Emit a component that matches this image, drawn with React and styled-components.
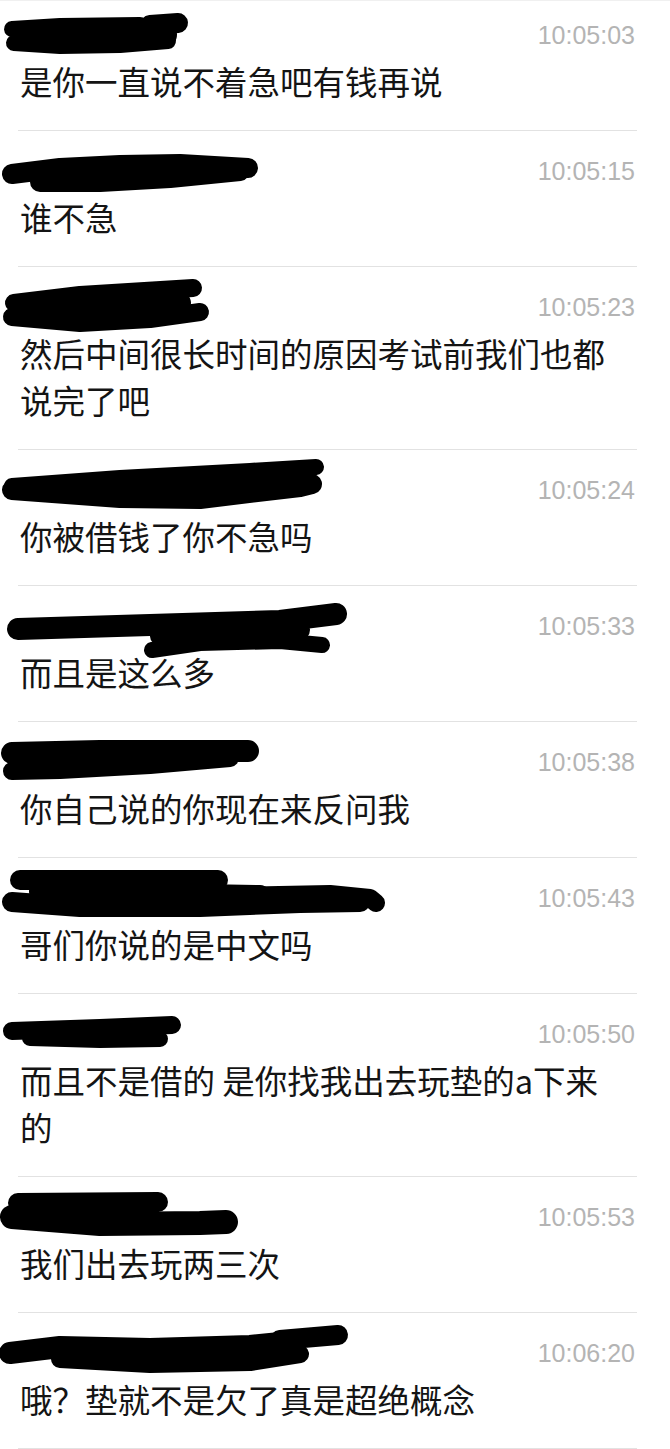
import styled, { createGlobalStyle } from 'styled-components';

const messages = [
  {
    time: '10:05:03',
    text: '是你一直说不着急吧有钱再说',
    marks: [
      { w: 16, p: '12,34 60,31 140,30' },
      { w: 20, p: '150,30 178,28' },
      { w: 16, p: '14,48 60,51 120,50 168,46' },
      { w: 24, p: '30,42 165,40' },
    ],
  },
  {
    time: '10:05:15',
    text: '谁不急',
    marks: [
      { w: 20, p: '12,43 60,37 120,34 180,33 248,37' },
      { w: 20, p: '40,51 100,51 170,47 240,40' },
    ],
  },
  {
    time: '10:05:23',
    text: '然后中间很长时间的原因考试前我们也都说完了吧',
    marks: [
      { w: 18, p: '14,36 80,28 193,21' },
      { w: 18, p: '12,50 80,56 150,52 200,45' },
      { w: 22, p: '40,44 180,36' },
    ],
  },
  {
    time: '10:05:24',
    text: '你被借钱了你不急吗',
    marks: [
      { w: 16, p: '12,36 120,28 250,21 316,17' },
      { w: 20, p: '12,40 120,48 200,49 300,37 312,34' },
      { w: 22, p: '40,40 260,32' },
      { w: 16, p: '200,36 305,26' },
    ],
  },
  {
    time: '10:05:33',
    text: '而且是这么多',
    marks: [
      { w: 22, p: '18,43 150,39 280,35 336,28' },
      { w: 16, p: '152,64 200,57 280,55 322,59' },
      { w: 20, p: '160,50 300,44' },
    ],
  },
  {
    time: '10:05:38',
    text: '你自己说的你现在来反问我',
    marks: [
      { w: 22, p: '12,31 100,29 248,29' },
      { w: 18, p: '12,49 60,48 150,43 230,36' },
      { w: 18, p: '40,40 200,34' },
    ],
  },
  {
    time: '10:05:43',
    text: '哥们你说的是中文吗',
    marks: [
      { w: 20, p: '20,22 218,22' },
      { w: 18, p: '220,38 330,36 370,40 376,45' },
      { w: 20, p: '12,44 80,49 200,49 300,45 360,44' },
      { w: 22, p: '40,34 260,38' },
    ],
  },
  {
    time: '10:05:50',
    text: '而且不是借的 是你找我出去玩垫的a下来的',
    marks: [
      { w: 18, p: '12,37 100,34 172,31' },
      { w: 16, p: '30,44 100,46 160,45' },
    ],
  },
  {
    time: '10:05:53',
    text: '我们出去玩两三次',
    marks: [
      { w: 20, p: '18,26 158,25' },
      { w: 24, p: '12,40 100,47 200,46 226,45' },
      { w: 18, p: '20,34 150,34' },
    ],
  },
  {
    time: '10:06:20',
    text: '哦？垫就不是欠了真是超绝概念',
    marks: [
      { w: 22, p: '10,40 60,34 150,36 250,33 290,29' },
      { w: 20, p: '280,27 338,22' },
      { w: 18, p: '60,46 150,51 250,49 300,41' },
    ],
  },
];

export default function App() {
  return (
    <>
      <GlobalStyle />
      <List>
        {messages.map(msg => (
          <Item key={msg.time}>
            <Head>
              <Scribble viewBox="0 18 400 44" aria-hidden="true">
                {msg.marks.map((m, i) => (
                  <polyline key={i} points={m.p} strokeWidth={m.w} />
                ))}
              </Scribble>
              <Time>{msg.time}</Time>
            </Head>
            <Text>{msg.text}</Text>
          </Item>
        ))}
      </List>
    </>
  );
}

const GlobalStyle = createGlobalStyle`
  html, body {
    margin: 0;
    background: #fff;
  }
`;

const List = styled.div`
  width: 670px;
  border-top: 1px solid #f0f0f0;
  overflow: hidden;
`;

const Item = styled.div`
  padding-top: 18px;

  &:first-child {
    padding-top: 12px;
  }

  &::after {
    content: '';
    display: block;
    height: 1px;
    margin: 26px 33px 0 18px;
    background: #e2e2e2;
  }
`;

const Head = styled.div`
  display: flex;
  align-items: center;
  justify-content: space-between;
  height: 44px;
  padding-right: 35px;
`;

const Scribble = styled.svg`
  display: block;
  width: 400px;
  height: 44px;
  flex-shrink: 0;
  overflow: visible;

  polyline {
    fill: none;
    stroke: #000;
    stroke-linecap: round;
    stroke-linejoin: round;
  }
`;

const Time = styled.span`
  font-family: 'Liberation Sans', Arial, sans-serif;
  font-size: 25px;
  color: #b4b4b4;
  line-height: 44px;
`;

const Text = styled.div`
  width: 595px;
  padding-left: 20px;
  font-family: 'Noto Sans CJK SC', 'Noto Sans', sans-serif;
  font-size: 32.5px;
  line-height: 47px;
  color: #141414;
`;
